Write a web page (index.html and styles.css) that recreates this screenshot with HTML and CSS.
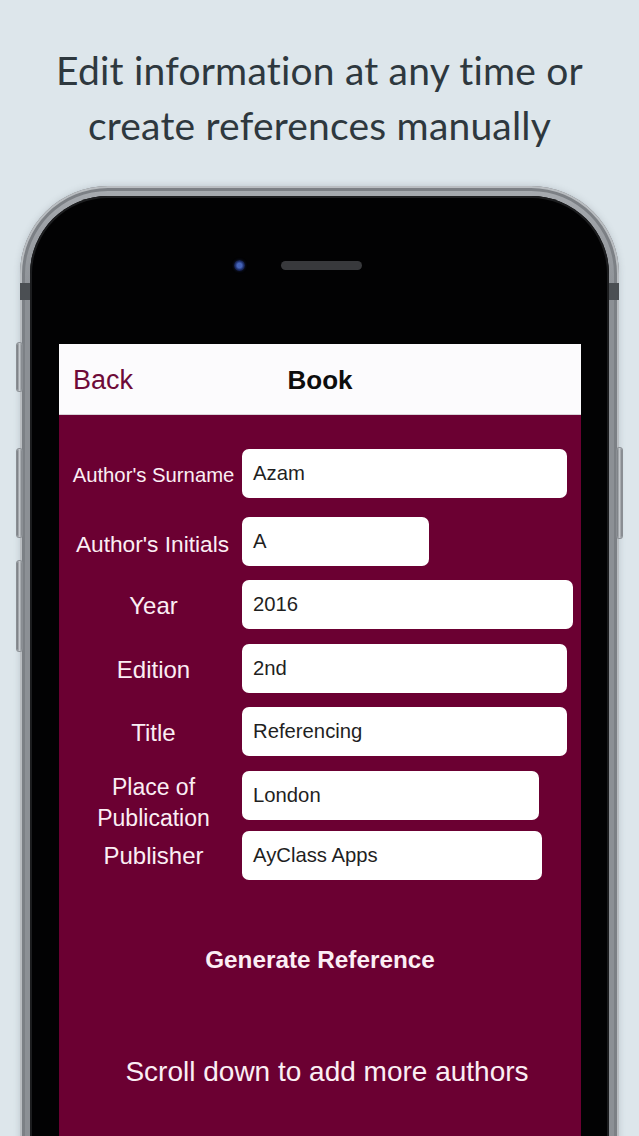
FILE: index.html
```html
<!DOCTYPE html>
<html lang="en">
<head>
<meta charset="utf-8">
<title>Book reference</title>
<link rel="stylesheet" href="styles.css">
</head>
<body>
<div class="page">
  <h1 class="headline">Edit information at any time or<br>create references manually</h1>
  <div class="phone">
    <span class="btn btn-mute"></span>
    <span class="btn btn-volup"></span>
    <span class="btn btn-voldown"></span>
    <span class="btn btn-power"></span>
    <span class="band band-left"></span>
    <span class="band band-right"></span>
    <div class="bezel">
      <div class="sensors">
        <span class="camera"></span>
        <span class="speaker"></span>
      </div>
      <div class="screen">
        <div class="navbar">
          <span class="back">Back</span>
          <span class="nav-title">Book</span>
        </div>
        <div class="form">
          <div class="row r1">
            <div class="label">Author's Surname</div>
            <div class="field w1">Azam</div>
          </div>
          <div class="row r2">
            <div class="label">Author's Initials</div>
            <div class="field w2">A</div>
          </div>
          <div class="row r3">
            <div class="label">Year</div>
            <div class="field w3">2016</div>
          </div>
          <div class="row r4">
            <div class="label">Edition</div>
            <div class="field w1">2nd</div>
          </div>
          <div class="row r5">
            <div class="label">Title</div>
            <div class="field w1">Referencing</div>
          </div>
          <div class="row r6">
            <div class="label label-two">Place of<br>Publication</div>
            <div class="field w4">London</div>
          </div>
          <div class="row r7">
            <div class="label">Publisher</div>
            <div class="field w5">AyClass Apps</div>
          </div>
          <div class="generate">Generate Reference</div>
          <div class="hint">Scroll down to add more authors</div>
        </div>
      </div>
    </div>
  </div>
</div>
</body>
</html>
```

FILE: styles.css
```css
html, body {
  margin: 0;
  padding: 0;
}
body {
  width: 639px;
  height: 1136px;
  overflow: hidden;
  background: #dde6eb;
}
.page {
  display: flex;
  flex-direction: column;
  align-items: center;
}
.headline {
  margin: 43px 0 0 0;
  font-family: Lato, "Open Sans", sans-serif;
  font-weight: 400;
  font-size: 39px;
  line-height: 55px;
  color: #2e383e;
  text-align: center;
  letter-spacing: 0.2px;
}
.phone {
  position: relative;
  margin-top: 33px;
  width: 599px;
  height: 960px;
  box-sizing: border-box;
  padding: 10px 10px 0 10px;
  border-radius: 88px 88px 0 0;
  background: linear-gradient(180deg, #a7abb0 0%, #8c9095 12%, #8c9095 100%);
  box-shadow: inset 0 0 0 2px #b9bdc1, inset 0 0 0 5px #7c8085, 0 0 6px rgba(90,100,110,0.25);
}
.band {
  position: absolute;
  top: 97px;
  width: 10px;
  height: 17px;
  background: #4b4f53;
}
.band-left { left: 0; }
.band-right { right: 0; }
.btn {
  position: absolute;
  width: 5px;
  border-radius: 3px;
  background: linear-gradient(90deg, #6f7378, #c5c9cd 50%, #7a7e83);
  box-shadow: 0 0 0 1px #8a8e93;
}
.btn-mute { left: -3px; top: 157px; height: 48px; }
.btn-volup { left: -3px; top: 263px; height: 88px; }
.btn-voldown { left: -3px; top: 375px; height: 90px; }
.btn-power { right: -3px; top: 262px; height: 90px; }
.bezel {
  height: 100%;
  box-sizing: border-box;
  padding: 0 28px 0 29px;
  background: #020203;
  border-radius: 78px 78px 0 0;
  box-shadow: inset 0 0 0 2px #1c1d1f;
  display: flex;
  flex-direction: column;
}
.sensors {
  height: 148px;
  display: flex;
  justify-content: center;
  align-items: flex-start;
  gap: 36px;
  padding-top: 61px;
  box-sizing: border-box;
  padding-right: 44px;
}
.camera {
  width: 11px;
  height: 11px;
  margin-top: 3px;
  border-radius: 50%;
  background: radial-gradient(circle at 50% 50%, #4563b8 0 30%, #1d2e6a 55%, #0d1330 80%);
  box-shadow: 0 0 3px rgba(60, 90, 180, 0.35);
}
.speaker {
  width: 81px;
  height: 9px;
  margin-top: 4px;
  border-radius: 5px;
  background: #38393c;
}
.screen {
  flex: 1;
  background: #6b0032;
  display: flex;
  flex-direction: column;
}
.navbar {
  height: 71px;
  background: #fcfbfd;
  border-bottom: 1px solid #d9d3d8;
  box-sizing: border-box;
  display: flex;
  align-items: center;
  position: relative;
  font-family: "Liberation Sans", Arial, sans-serif;
}
.back {
  margin-left: 14px;
  margin-top: 2px;
  font-size: 27px;
  color: #6e0a38;
}
.nav-title {
  position: absolute;
  left: 0;
  right: 0;
  top: 0;
  bottom: 0;
  display: flex;
  align-items: center;
  justify-content: center;
  padding-top: 2px;
  font-size: 26px;
  font-weight: 700;
  color: #0d0d0d;
}
.form {
  display: flex;
  flex-direction: column;
  font-family: "Liberation Sans", Arial, sans-serif;
}
.row {
  display: flex;
  align-items: center;
  height: 49px;
}
.r1 { margin-top: 34px; }
.r2 { margin-top: 19px; }
.r3 { margin-top: 14px; }
.r4 { margin-top: 15px; }
.r5 { margin-top: 14px; }
.r6 { margin-top: 15px; }
.r7 { margin-top: 11px; }
.label {
  width: 183px;
  padding-left: 6px;
  box-sizing: border-box;
  text-align: center;
  color: #fbeef4;
  font-size: 24px;
  line-height: 28px;
  white-space: nowrap;
}
.r1 .label { font-size: 20.3px; margin-top: 3px; }
.r2 .label { font-size: 22.7px; margin-top: 4px; padding-left: 4px; }
.r3 .label, .r4 .label, .r5 .label { margin-top: 2px; }
.label-two {
  font-size: 23px;
  line-height: 31px;
  margin-top: 14px;
}
.field {
  height: 49px;
  flex-shrink: 0;
  box-sizing: border-box;
  background: #ffffff;
  border-radius: 7px;
  padding-left: 11px;
  display: flex;
  align-items: center;
  font-size: 20.3px;
  color: #1f1f1f;
}
.w1 { width: 325px; }
.w2 { width: 187px; }
.w3 { width: 331px; }
.w4 { width: 297px; }
.w5 { width: 300px; }
.generate {
  margin-top: 66px;
  text-align: center;
  font-size: 24.3px;
  line-height: 28px;
  font-weight: 700;
  color: #fbeef4;
}
.hint {
  margin-top: 82px;
  padding-left: 14px;
  text-align: center;
  font-size: 28px;
  line-height: 32px;
  color: #fbeef4;
}
```
